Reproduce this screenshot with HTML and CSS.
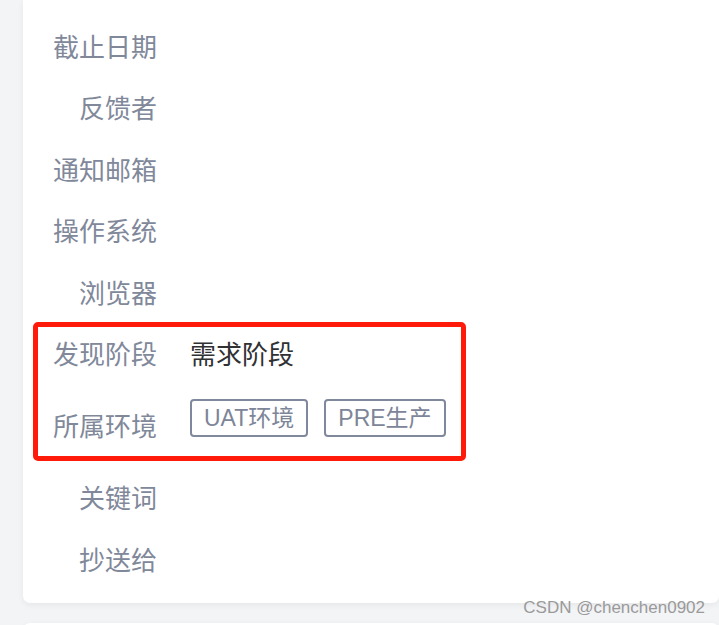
FILE: index.html
```html
<!DOCTYPE html>
<html>
<head>
    <meta charset="utf-8">
    <meta name="viewport" content="width=device-width, initial-scale=1">
    <title>问题详情</title>
    <link rel="stylesheet" href="styles.css">
</head>
<body>
    <div class="page">
        <div class="card">
            <div class="row"><span class="label">截止日期</span><span class="value"></span></div>
            <div class="row"><span class="label">反馈者</span><span class="value"></span></div>
            <div class="row"><span class="label">通知邮箱</span><span class="value"></span></div>
            <div class="row"><span class="label">操作系统</span><span class="value"></span></div>
            <div class="row"><span class="label">浏览器</span><span class="value"></span></div>

            <div class="highlight">
                <div class="row"><span class="label">发现阶段</span><span class="value">需求阶段</span></div>
                <div class="row row-tags">
                    <span class="label">所属环境</span>
                    <div class="tags">
                        <span class="tag">UAT环境</span>
                        <span class="tag">PRE生产</span>
                    </div>
                </div>
            </div>

            <div class="row"><span class="label">关键词</span><span class="value"></span></div>
            <div class="row"><span class="label">抄送给</span><span class="value"></span></div>
        </div>
        <div class="card card-next"></div>
        <div class="watermark">CSDN @chenchen0902</div>
    </div>
</body>
</html>
```

FILE: styles.css
```css
body {
    margin: 0;
    padding: 0;
    background-color: #f3f4f6;
    font-family: "Liberation Sans", Arial, "Noto Sans CJK SC", sans-serif;
    overflow: hidden;
}
.page {
    position: relative;
    height: 625px;
    padding-left: 23px;
}
.card {
    background: #fff;
    border-radius: 0 0 7px 7px;
    box-shadow: 0 2px 6px rgba(0, 0, 0, 0.06);
    padding: 17px 0 11px 30px;
}
.card-next {
    margin-top: 20px;
    height: 40px;
    border-radius: 7px 7px 0 0;
    padding: 0;
}
.row {
    display: flex;
    align-items: flex-start;
    padding: 12.75px 0;
    font-size: 26px;
    line-height: 36px;
}
.label {
    width: 104px;
    text-align: right;
    white-space: nowrap;
    color: #80889a;
    flex-shrink: 0;
}
.value {
    margin-left: 33px;
    color: #303133;
    white-space: nowrap;
}
.row-tags .label {
    margin: 10.5px 0;
}
.tags {
    display: flex;
    gap: 16px;
    margin-left: 33px;
}
.tag {
    display: inline-block;
    height: 38px;
    box-sizing: border-box;
    border: 2px solid #80889b;
    border-radius: 4px;
    padding: 0 12px;
    font-size: 23px;
    line-height: 34px;
    white-space: nowrap;
    color: #7d8598;
}
.highlight {
    position: relative;
}
.highlight::after {
    content: "";
    position: absolute;
    left: -20px;
    top: -3px;
    width: 433px;
    height: 139px;
    box-sizing: border-box;
    border: 5px solid #ff1a0a;
    border-radius: 5px;
    pointer-events: none;
}
.watermark {
    position: absolute;
    right: 14px;
    top: 598px;
    font-size: 17px;
    color: #9a9a9a;
    font-family: "Liberation Sans", Arial, sans-serif;
}
```
